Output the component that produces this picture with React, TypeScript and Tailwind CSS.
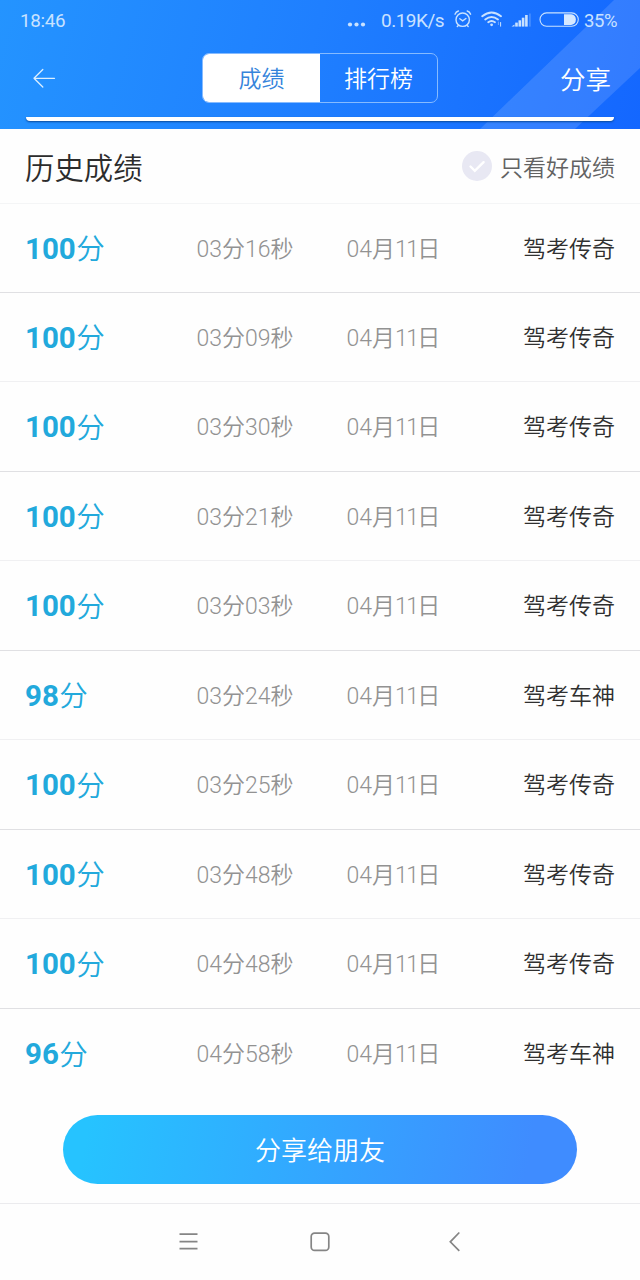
type RecordItem = { score: number; time: string; month: string; day: string; title: string };

const records: RecordItem[] = [
  { score: 100, time: "03分16秒", month: "04月", day: "11日", title: "驾考传奇" },
  { score: 100, time: "03分09秒", month: "04月", day: "11日", title: "驾考传奇" },
  { score: 100, time: "03分30秒", month: "04月", day: "11日", title: "驾考传奇" },
  { score: 100, time: "03分21秒", month: "04月", day: "11日", title: "驾考传奇" },
  { score: 100, time: "03分03秒", month: "04月", day: "11日", title: "驾考传奇" },
  { score: 98, time: "03分24秒", month: "04月", day: "11日", title: "驾考车神" },
  { score: 100, time: "03分25秒", month: "04月", day: "11日", title: "驾考传奇" },
  { score: 100, time: "03分48秒", month: "04月", day: "11日", title: "驾考传奇" },
  { score: 100, time: "04分48秒", month: "04月", day: "11日", title: "驾考传奇" },
  { score: 96, time: "04分58秒", month: "04月", day: "11日", title: "驾考车神" },
];

function StatusIcons() {
  return (
    <svg width="128" height="24" viewBox="452 8 128 24" fill="none" stroke="#c9e2ff" strokeWidth="1.4" strokeLinecap="round">
      {/* alarm clock */}
      <circle cx="462.7" cy="19.7" r="6.7" />
      <path d="M459.8 18.7l2.9 2.2 3.2-2.4M455 14.2q1-2.4 3.4-3.2M467.2 11q2.5.8 3.4 3.2M458.3 25.4l-1 1M467.2 25.4l1 1" />
      {/* wifi */}
      <path d="M482.2 16.2q9.4-7.6 18.8 0" strokeWidth="1.9" />
      <path d="M485.2 19.4q6.4-5 12.8 0" strokeWidth="1.9" />
      <path d="M488.2 22.3q3.4-2.6 6.8 0" strokeWidth="1.8" />
      <circle cx="491.6" cy="24.8" r="1.4" fill="#c9e2ff" stroke="none" />
      <path d="M498.4 22v2.6" strokeWidth="0.8" opacity=".6" />
      <path d="M500.6 22.5v3.7" strokeWidth="1" />
      {/* signal */}
      <g fill="#c9e2ff" stroke="none">
        <path d="M511.5 26.6l3-2.2v2.2z" />
        <rect x="515.2" y="22.6" width="2.6" height="4" />
        <rect x="518.5" y="20.3" width="2.6" height="6.3" />
        <rect x="521.8" y="17.7" width="2.6" height="8.9" />
        <rect x="525.1" y="15" width="2.6" height="11.6" />
        <rect x="529" y="13.5" width="1.8" height="13.1" opacity=".25" />
      </g>
      {/* battery */}
      <rect x="540" y="12.9" width="38.3" height="13.3" rx="6.6" strokeWidth="1.1" />
      <path d="M564 14.2h7.2a5.4 5.4 0 0 1 0 10.7H564z" fill="#d6e8ff" stroke="none" />
    </svg>
  );
}

function Header() {
  return (
    <header className="relative flex h-[129px] shrink-0 flex-col overflow-hidden bg-[linear-gradient(105deg,#2494ff_0%,#1f7fff_48%,#1467ff_100%)]">
      <svg className="absolute inset-0" width="640" height="129">
        <path d="M480 129L614 0H640V68L575 129Z" fill="#fff" opacity=".13" />
      </svg>
      <div className="relative flex h-10 items-center pl-[20px] pr-[20px] text-[#c9e2ff]">
        <span className="w-[48px] pt-[1px] font-[Roboto,sans-serif] text-[18.8px] leading-6 font-normal tracking-[-0.3px]">18:46</span>
        <svg className="ml-[279px] shrink-0" width="20" height="24" fill="#c9e2ff">
          <circle cx="3" cy="16.5" r="2.1" />
          <circle cx="9.5" cy="16.5" r="2.1" />
          <circle cx="16" cy="16.5" r="2.1" />
        </svg>
        <span className="ml-[14px] w-[71px] shrink-0 pt-[1px] font-[Roboto,sans-serif] text-[19px] leading-6 font-normal tracking-[-0.5px] whitespace-nowrap">0.19K/s</span>
        <StatusIcons />
        <span className="ml-[4px] pt-[1px] font-[Roboto,sans-serif] text-[18.5px] leading-6 font-normal tracking-[-0.4px]">35%</span>
      </div>
      <div className="relative flex h-[77px] items-center justify-between pb-[2px] pl-[33px] pr-[29px]">
        <svg width="170" height="24" fill="none" stroke="#dcefff" strokeWidth="1.3" strokeLinecap="round" strokeLinejoin="round">
          <path d="M21.5 12.3H1M9.8 3.5L1 12.3l8.8 8.7" />
        </svg>
        <div className="-ml-px grid h-[50px] w-[236px] grid-cols-[117px_1fr] overflow-hidden rounded-[7px] border border-[#86bbff] text-[23px] leading-[51px] font-[350]">
          <span className="bg-white text-center text-[#3584db]">成绩</span>
          <span className="text-center text-white">排行榜</span>
        </div>
        <span className="w-[173px] pt-[4px] text-right text-[25.5px] leading-[50px] font-[350] text-white">分享</span>
      </div>
      <div className="relative mx-[26px] h-[4px] rounded-b-[7px] bg-white shadow-[0_1px_2px_#0a4a9a]" />
    </header>
  );
}

function RecordRow({ item, index, last }: { item: RecordItem; index: number; last: boolean }) {
  const height = index === 0 || index % 2 === 1 ? "h-[89px]" : "h-[90px]";
  const border = last ? "" : index % 2 === 1 ? "border-b border-[#f0f0f2]" : "border-b border-[#e0e0e3]";
  return (
    <li className={`grid ${height} ${border} grid-cols-[160px_120px_170px_1fr] items-center px-[25px] text-[23px] font-[350]`}>
      <span className="flex items-center pt-[1px] text-[#22a9dc]">
        <b className="font-[Roboto,sans-serif] text-[29.5px] leading-9 font-bold">{item.score}</b>
        <span className="pt-[3px] pl-[0.5px] text-[28.5px] leading-9">分</span>
      </span>
      <span className="-mx-2 pt-[3px] text-center text-[23px] leading-8 whitespace-nowrap text-[#929292]">{item.time}</span>
      <span className="pl-[41.5px] pt-[3px] text-[23px] leading-8 whitespace-nowrap text-[#929292]">
        {item.month}
        <span className="tracking-[-1.6px]">{item.day}</span>
      </span>
      <span className="pt-[3px] text-right leading-8 whitespace-nowrap text-[#303030]">{item.title}</span>
    </li>
  );
}

export default function App() {
  return (
    <div className="flex h-[1280px] w-[640px] flex-col overflow-hidden bg-[#fefefe] font-[Roboto,'Noto_Sans_CJK_SC',sans-serif]">
      <Header />
      <section className="flex h-[75px] shrink-0 items-center justify-between border-b border-[#f4f5f6] px-[25px]">
        <h1 className="pt-[5px] text-[29.4px] leading-10 font-[350] text-[#2c2c2c]">历史成绩</h1>
        <label className="flex items-center gap-[8px] text-[23px] leading-8 font-[350] text-[#626262]">
          <svg width="30" height="30" fill="none">
            <circle cx="15" cy="15" r="15" fill="#e8e8f3" />
            <path d="M8.5 15.5l4.3 4.3 8.8-8.6" stroke="#fff" strokeWidth="2.4" strokeLinecap="round" />
          </svg>
          <span className="pt-[5px]">只看好成绩</span>
        </label>
      </section>
      <ul className="h-[911px] shrink-0">
        {records.map((item, i) => (
          <RecordRow key={i} item={item} index={i} last={i === records.length - 1} />
        ))}
      </ul>
      <div className="h-[88px] shrink-0 px-[63px]">
        <button className="block h-[69px] w-[514px] rounded-full bg-[linear-gradient(100deg,#26c3ff_5%,#3f8cff_90%)] pt-[3px] text-[26px] font-[350] text-white">
          分享给朋友
        </button>
      </div>
      <nav className="flex h-[77px] shrink-0 items-center border-t border-[#ebebee] pl-[178px]">
        <svg width="290" height="24" fill="none" stroke="#858585" strokeWidth="1.7">
          <path d="M1.5 4.2H19.5M1.5 11.6H19.5M1.5 18.7H19.5" />
          <rect x="133.2" y="3.2" width="17.6" height="17.2" rx="3.4" />
          <path d="M281.3 2.5L272.3 11.8l9 9" />
        </svg>
      </nav>
    </div>
  );
}
